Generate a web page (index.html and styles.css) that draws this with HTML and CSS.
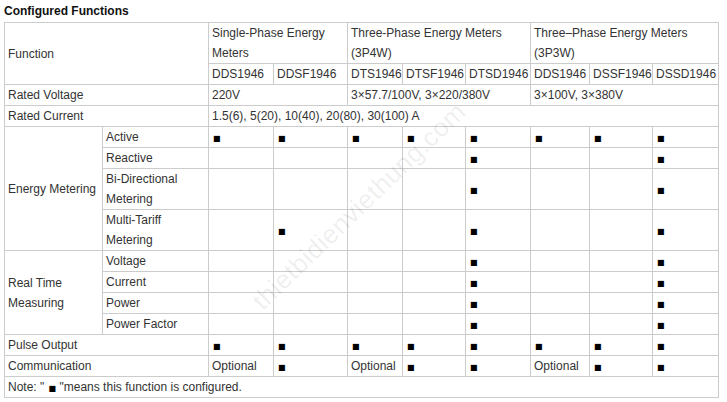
FILE: index.html
```html
<!DOCTYPE html>
<html>
<head>
<meta charset="utf-8">
<link rel="stylesheet" href="styles.css">
</head>
<body>
<div class="page">
  <h2 class="title">Configured Functions</h2>
  <div class="wrap">
  <table class="spec">
    <colgroup>
      <col class="c98"><col class="c106"><col class="c65"><col class="c74"><col class="c55"><col class="c63"><col class="c65"><col class="c59"><col class="c63"><col class="c66">
    </colgroup>
    <tr>
      <td colspan="2" rowspan="2">Function</td>
      <td colspan="2">Single-Phase Energy Meters</td>
      <td colspan="3">Three-Phase Energy Meters (3P4W)</td>
      <td colspan="3">Three–Phase Energy Meters (3P3W)</td>
    </tr>
    <tr>
      <td>DDS1946</td><td>DDSF1946</td><td>DTS1946</td><td>DTSF1946</td><td>DTSD1946</td><td>DDS1946</td><td>DSSF1946</td><td>DSSD1946</td>
    </tr>
    <tr>
      <td colspan="2">Rated Voltage</td>
      <td colspan="2">220V</td>
      <td colspan="3">3×57.7/100V, 3×220/380V</td>
      <td colspan="3">3×100V, 3×380V</td>
    </tr>
    <tr>
      <td colspan="2">Rated Current</td>
      <td colspan="8">1.5(6), 5(20), 10(40), 20(80), 30(100) A</td>
    </tr>
    <tr>
      <td rowspan="4">Energy Metering</td>
      <td>Active</td>
      <td><span class="m">■</span></td><td><span class="m">■</span></td><td><span class="m">■</span></td><td><span class="m">■</span></td><td><span class="m">■</span></td><td><span class="m">■</span></td><td><span class="m">■</span></td><td><span class="m">■</span></td>
    </tr>
    <tr>
      <td>Reactive</td>
      <td></td><td></td><td></td><td></td><td><span class="m">■</span></td><td></td><td></td><td><span class="m">■</span></td>
    </tr>
    <tr>
      <td>Bi-Directional Metering</td>
      <td></td><td></td><td></td><td></td><td><span class="m">■</span></td><td></td><td></td><td><span class="m">■</span></td>
    </tr>
    <tr>
      <td>Multi-Tariff Metering</td>
      <td></td><td><span class="m">■</span></td><td></td><td></td><td><span class="m">■</span></td><td></td><td></td><td><span class="m">■</span></td>
    </tr>
    <tr>
      <td rowspan="4">Real Time Measuring</td>
      <td>Voltage</td>
      <td></td><td></td><td></td><td></td><td><span class="m">■</span></td><td></td><td></td><td><span class="m">■</span></td>
    </tr>
    <tr>
      <td>Current</td>
      <td></td><td></td><td></td><td></td><td><span class="m">■</span></td><td></td><td></td><td><span class="m">■</span></td>
    </tr>
    <tr>
      <td>Power</td>
      <td></td><td></td><td></td><td></td><td><span class="m">■</span></td><td></td><td></td><td><span class="m">■</span></td>
    </tr>
    <tr>
      <td>Power Factor</td>
      <td></td><td></td><td></td><td></td><td><span class="m">■</span></td><td></td><td></td><td><span class="m">■</span></td>
    </tr>
    <tr>
      <td colspan="2">Pulse Output</td>
      <td><span class="m">■</span></td><td><span class="m">■</span></td><td><span class="m">■</span></td><td><span class="m">■</span></td><td><span class="m">■</span></td><td><span class="m">■</span></td><td><span class="m">■</span></td><td><span class="m">■</span></td>
    </tr>
    <tr>
      <td colspan="2">Communication</td>
      <td>Optional</td><td><span class="m">■</span></td><td>Optional</td><td><span class="m">■</span></td><td><span class="m">■</span></td><td>Optional</td><td><span class="m">■</span></td><td><span class="m">■</span></td>
    </tr>
    <tr>
      <td colspan="10">Note: " <span class="m">■</span> "means this function is configured.</td>
    </tr>
  </table>
  <div class="watermark">thietbidienviethung.com</div>
  </div>
</div>
</body>
</html>
```

FILE: styles.css
```css
html, body {
  margin: 0;
  padding: 0;
  background: #fff;
}

.page {
  padding: 3px 4px 0 4px;
  font-family: "Liberation Sans", Arial, sans-serif;
  font-size: 12px;
  color: #333;
}

.title {
  margin: 0 0 3px 0;
  font-size: 12px;
  line-height: 16px;
  font-weight: bold;
  color: #111;
}

.wrap {
  position: relative;
  width: 715px;
}

.spec {
  border-collapse: collapse;
  table-layout: fixed;
  width: 715px;
}

.spec td {
  border: 1px solid #cccccc;
  padding: 0 2px 0 3px;
  height: 20px;
  line-height: 20px;
  vertical-align: middle;
  text-align: left;
  white-space: normal;
  overflow: hidden;
}

.c98 { width: 98px; }
.c106 { width: 106px; }
.c65 { width: 65px; }
.c74 { width: 74px; }
.c55 { width: 55px; }
.c63 { width: 63px; }
.c59 { width: 59px; }
.c66 { width: 66px; }

.m {
  font-family: "DejaVu Sans", sans-serif;
  font-size: 8px;
  line-height: 0;
  color: #000;
  margin-left: 1px;
}

.watermark {
  position: absolute;
  left: 242px;
  top: 272px;
  transform: rotate(-44deg);
  transform-origin: 0 0;
  font-family: "Liberation Sans", Arial, sans-serif;
  font-size: 26px;
  letter-spacing: 0.5px;
  color: rgba(0, 0, 0, 0.08);
  white-space: nowrap;
  pointer-events: none;
}
```
